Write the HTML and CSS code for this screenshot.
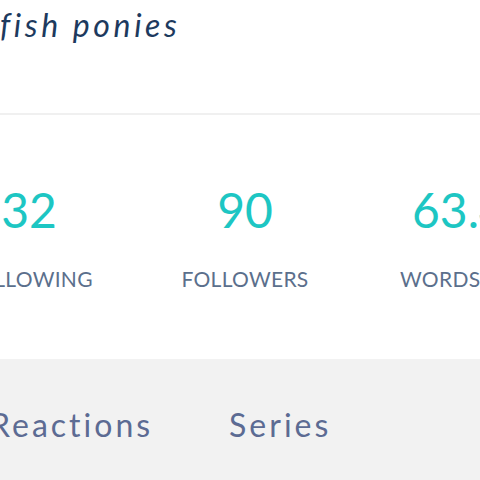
FILE: index.html
```html
<!DOCTYPE html>
<html lang="en">
<head>
<meta charset="utf-8">
<title>fish ponies</title>
<link rel="stylesheet" href="styles.css">
</head>
<body>
<header class="profile-head">
  <h1 class="profile-name">fish ponies</h1>
</header>
<section class="stats">
  <div class="stat">
    <div class="stat-num">32</div>
    <div class="stat-label">FOLLOWING</div>
  </div>
  <div class="stat">
    <div class="stat-num">90</div>
    <div class="stat-label">FOLLOWERS</div>
  </div>
  <div class="stat">
    <div class="stat-num">63.4</div>
    <div class="stat-label">WORDS</div>
  </div>
</section>
<nav class="tabs">
  <span class="tab">Reactions</span>
  <span class="tab">Series</span>
</nav>
</body>
</html>
```
FILE: styles.css
```css
html, body {
  margin: 0;
  padding: 0;
  background: #ffffff;
  overflow: hidden;
  font-family: Lato, "Open Sans", sans-serif;
}

.profile-head {
  padding: 5px 0 68px 0;
  border-bottom: 2px solid #f0f0f0;
}

.profile-name {
  margin: 0;
  font-size: 32px;
  line-height: 40px;
  font-style: italic;
  font-weight: 400;
  letter-spacing: 3.6px;
  color: #1d3a5e;
}

.stats {
  display: grid;
  grid-template-columns: 216px 216px 170px;
  margin-left: -79px;
  padding: 66px 0 68px 0;
}

.stat {
  text-align: center;
  white-space: nowrap;
}

.stat:last-child {
  text-align: left;
  padding-left: 47px;
}

.stat:last-child .stat-num {
  padding-left: 12px;
}

.stat-num {
  font-size: 48px;
  line-height: 58px;
  color: #1dc6c3;
}

.stat-label {
  margin-top: 27px;
  font-size: 21px;
  line-height: 25px;
  letter-spacing: 0.3px;
  color: #5b6f8c;
}

.tabs {
  display: flex;
  gap: 76px;
  background: #f2f2f2;
  padding: 46px 0 35px 0;
  margin-left: -10px;
}

.tab {
  font-size: 32px;
  line-height: 40px;
  letter-spacing: 3px;
  color: #5c6b93;
}
```
